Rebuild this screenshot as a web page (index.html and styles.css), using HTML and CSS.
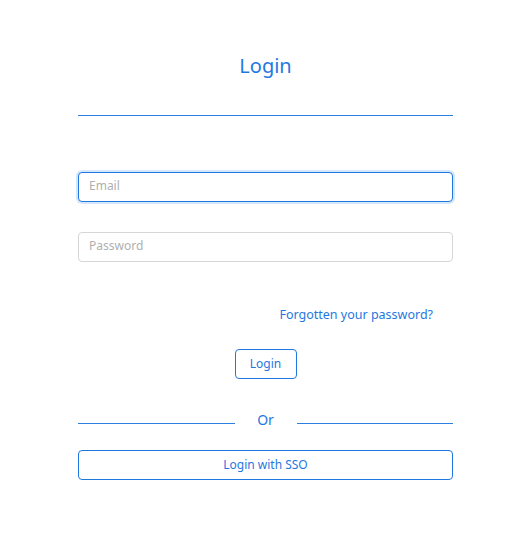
FILE: index.html
```
<!DOCTYPE html>
<html>
<head>
<meta charset="utf-8">
<link rel="stylesheet" href="styles.css">
</head>
<body>
<div class="page">
  <h1 class="title">Login</h1>
  <div class="rule"></div>
  <form class="form">
    <input class="field focused" type="text" placeholder="Email">
    <input class="field" type="password" placeholder="Password">
    <div class="forgot-row"><a class="forgot" href="#">Forgotten your password?</a></div>
    <div class="login-row"><button type="button" class="btn">Login</button></div>
    <div class="or"><span class="or-line"></span><span class="or-text">Or</span><span class="or-line"></span></div>
    <button type="button" class="btn btn-wide">Login with SSO</button>
  </form>
</div>
</body>
</html>
```
FILE: styles.css
```
html, body { margin: 0; padding: 0; background: #fff; }
body { font-family: "Noto Sans", "Open Sans", sans-serif; color: #1f78e0; }
.page { width: 375px; margin-left: 78px; padding-top: 52px; }
.title { margin: 0; font-size: 20px; font-weight: 400; line-height: 28px; text-align: center; color: #1f78e0; }
.rule { height: 1px; background: #2b7fe0; margin-top: 35px; }
.form { display: flex; flex-direction: column; margin-top: 56px; }
.field { box-sizing: border-box; height: 30px; width: 100%; border: 1px solid #d6d6d6; border-radius: 4px; padding: 0 10px 3px; font-family: inherit; font-size: 12px; color: #333; outline: none; }
.field::placeholder { color: #b0b0b0; }
.field + .field { margin-top: 30px; }
.field.focused { border-color: #1f78e0; box-shadow: 0 0 0 2px #d5e7fb; }
.forgot-row { display: flex; justify-content: flex-end; padding-right: 20px; margin-top: 44px; }
.forgot { font-size: 12.5px; color: #1f78e0; text-decoration: none; line-height: 18px; }
.login-row { display: flex; justify-content: center; margin-top: 25px; }
.btn { box-sizing: border-box; height: 30px; padding: 0 14px 2px; background: #fff; border: 1px solid #1f78e0; border-radius: 4px; color: #1f78e0; font-family: inherit; font-size: 12px; cursor: pointer; }
.login-row .btn { width: 62px; padding: 0 0 2px; }
.or { display: flex; align-items: center; margin-top: 29px; height: 22px; }
.or-line { flex: 1; height: 1px; background: #2b7fe0; margin-top: 8px; }
.or-text { width: 62px; text-align: center; font-size: 14px; color: #1f78e0; }
.btn-wide { width: 100%; margin-top: 20px; }
```
